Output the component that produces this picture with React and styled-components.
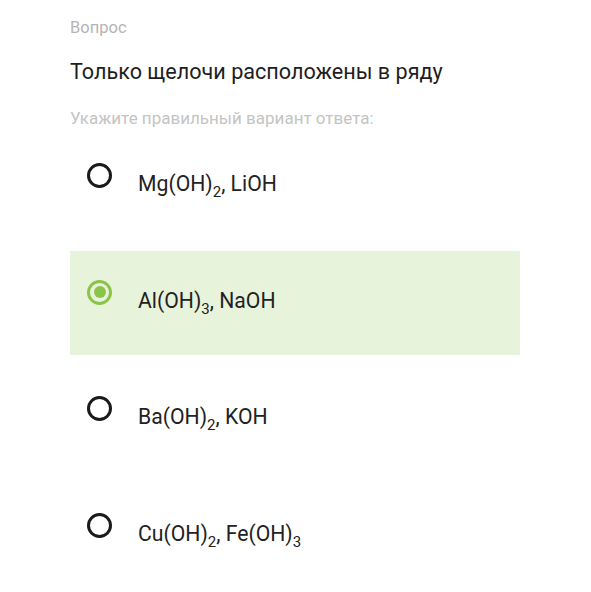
import React from 'react';
import styled, { createGlobalStyle } from 'styled-components';

const GlobalStyle = createGlobalStyle`
  html, body {
    margin: 0;
    padding: 0;
    background: #ffffff;
  }
  body {
    font-family: Roboto, "Liberation Sans", sans-serif;
  }
`;

const options = [
  { id: 1, parts: ['Mg(OH)', '2', ', LiOH'] },
  { id: 2, parts: ['Al(OH)', '3', ', NaOH'], checked: true },
  { id: 3, parts: ['Ba(OH)', '2', ', KOH'] },
  { id: 4, parts: ['Cu(OH)', '2', ', Fe(OH)', '3'] },
];

function Formula({ parts }) {
  return (
    <OptionText>
      {parts.map((p, i) => (i % 2 === 1 ? <Sub key={i}>{p}</Sub> : <span key={i}>{p}</span>))}
    </OptionText>
  );
}

export default function App() {
  return (
    <>
      <GlobalStyle />
      <Page>
        <Label>Вопрос</Label>
        <Question>Только щелочи расположены в ряду</Question>
        <Hint>Укажите правильный вариант ответа:</Hint>
        <List>
          {options.map(o => (
            <Option key={o.id} checked={o.checked}>
              <Radio checked={o.checked} />
              <Formula parts={o.parts} />
            </Option>
          ))}
        </List>
      </Page>
    </>
  );
}

const Page = styled.div`
  width: 591px;
  height: 592px;
  padding: 18px 71px 0 70px;
  box-sizing: border-box;
  overflow: hidden;
`;

const Label = styled.div`
  font-size: 16.5px;
  line-height: 20px;
  color: #b4b4b4;
`;

const Question = styled.div`
  margin-top: 22px;
  font-size: 21.6px;
  line-height: 24px;
  color: #1e1e1e;
`;

const Hint = styled.div`
  margin-top: 24px;
  font-size: 17px;
  line-height: 20px;
  color: #c4c4c4;
`;

const List = styled.div`
  margin-top: 6px;
  display: flex;
  flex-direction: column;
  gap: 12.5px;
`;

const Option = styled.div`
  height: 104px;
  display: flex;
  align-items: flex-start;
  padding-left: 17px;
  box-sizing: border-box;
  background: ${p => (p.checked ? '#e8f3dc' : 'transparent')};
`;

const Radio = styled.div`
  margin-top: 29px;
  width: 25px;
  height: 25px;
  box-sizing: border-box;
  border-radius: 50%;
  border: 3px solid ${p => (p.checked ? '#8cc34b' : '#1a1a1a')};
  flex-shrink: 0;
  position: relative;
  &::after {
    content: '';
    display: ${p => (p.checked ? 'block' : 'none')};
    position: absolute;
    left: 50%;
    top: 50%;
    width: 12px;
    height: 12px;
    margin: -6px 0 0 -6px;
    border-radius: 50%;
    background: #8cc34b;
  }
`;

const OptionText = styled.div`
  margin-top: 38px;
  margin-left: 26px;
  font-size: 21.2px;
  line-height: 24px;
  color: #222222;
`;

const Sub = styled.sub`
  font-size: 15px;
  line-height: 0;
  vertical-align: -6px;
`;
